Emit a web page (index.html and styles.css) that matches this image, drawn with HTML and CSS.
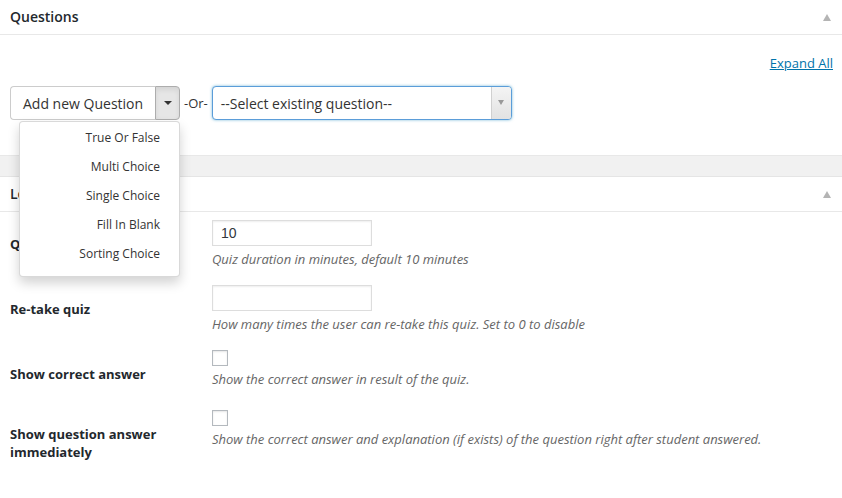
FILE: index.html
```html
<!DOCTYPE html>
<html>
<head>
<meta charset="utf-8">
<link rel="stylesheet" href="styles.css">
</head>
<body>
<div class="postbox">
  <div class="postbox-head">
    <h2>Questions</h2>
    <span class="toggle-arrow"></span>
  </div>
  <div class="inside">
    <div class="expand-row"><a href="#" class="expand-link">Expand All</a></div>
    <div class="toolbar">
      <div class="btn-group">
        <span class="btn-main">Add new Question</span>
        <span class="btn-toggle"><span class="caret"></span></span>
        <ul class="dropdown-menu">
          <li>True Or False</li>
          <li>Multi Choice</li>
          <li>Single Choice</li>
          <li>Fill In Blank</li>
          <li>Sorting Choice</li>
        </ul>
      </div>
      <span class="or">-Or-</span>
      <div class="select">
        <span class="select-text">--Select existing question--</span>
        <span class="select-arrow"><span class="select-caret"></span></span>
      </div>
    </div>
  </div>
</div>
<div class="band"></div>
<div class="postbox">
  <div class="postbox-head head2">
    <h2>Lesson Settings</h2>
    <span class="toggle-arrow"></span>
  </div>
  <div class="form">
    <div class="row row-text">
      <div class="label">Quiz duration</div>
      <div class="field">
        <div class="text-input">10</div>
        <div class="desc">Quiz duration in minutes, default 10 minutes</div>
      </div>
    </div>
    <div class="row row-text">
      <div class="label">Re-take quiz</div>
      <div class="field">
        <div class="text-input"></div>
        <div class="desc">How many times the user can re-take this quiz. Set to 0 to disable</div>
      </div>
    </div>
    <div class="row row-check">
      <div class="label">Show correct answer</div>
      <div class="field">
        <div class="checkbox"></div>
        <div class="desc">Show the correct answer in result of the quiz.</div>
      </div>
    </div>
    <div class="row row-check">
      <div class="label">Show question answer<br>immediately</div>
      <div class="field">
        <div class="checkbox"></div>
        <div class="desc">Show the correct answer and explanation (if exists) of the question right after student answered.</div>
      </div>
    </div>
  </div>
</div>
</body>
</html>
```
FILE: styles.css
```css
* { box-sizing: border-box; }
html, body { margin: 0; padding: 0; background: #fff; }
body {
  font-family: "Open Sans", "DejaVu Sans", sans-serif;
  color: #444;
  font-size: 13px;
  width: 842px;
  height: 498px;
  overflow: hidden;
}
.postbox { background: #fff; }
.postbox-head {
  display: flex;
  align-items: center;
  justify-content: space-between;
  height: 35px;
  padding: 0 10px;
  border-bottom: 1px solid #e8e8e8;
}
.postbox-head h2 {
  margin: 0;
  font-size: 14px;
  font-weight: 600;
  color: #23282d;
  line-height: 20px;
}
.toggle-arrow {
  width: 0; height: 0;
  border-left: 4px solid transparent;
  border-right: 4px solid transparent;
  border-bottom: 7px solid #b4b4b4;
  margin-right: 1px;
}
.inside { padding: 0 9px 35px 10px; position: relative; }
.expand-row { text-align: right; padding-top: 19px; line-height: 18px; }
.expand-link { color: #0073aa; text-decoration: underline; font-size: 13px; }
.toolbar { display: flex; align-items: center; margin-top: 14px; height: 34px; }
.btn-group { position: relative; display: flex; height: 34px; }
.btn-main {
  display: flex; align-items: center;
  width: 145px;
  padding-left: 12px;
  font-size: 14px;
  color: #333;
  border: 1px solid #ccc;
  border-right: none;
  border-radius: 4px 0 0 4px;
  background: #fff;
}
.btn-toggle {
  display: flex; align-items: center; justify-content: center;
  width: 25px;
  border: 1px solid #adadad;
  border-radius: 0 4px 4px 0;
  background: #e6e6e6;
  box-shadow: inset 0 3px 5px rgba(0,0,0,.08);
}
.caret {
  width: 0; height: 0;
  border-left: 4px solid transparent;
  border-right: 4px solid transparent;
  border-top: 4px solid #333;
}
.dropdown-menu {
  position: absolute;
  top: 35px;
  left: 9px;
  width: 161px;
  margin: 0;
  padding: 1px 0 8px;
  list-style: none;
  background: #fff;
  border: 1px solid rgba(0,0,0,.15);
  border-radius: 4px;
  box-shadow: 0 6px 12px rgba(0,0,0,.175);
  z-index: 10;
}
.dropdown-menu li {
  height: 29px;
  line-height: 29px;
  text-align: right;
  padding-right: 19px;
  font-size: 12px;
  color: #333;
}
.or { margin: 0 4px; font-size: 13px; color: #333; }
.select {
  display: flex;
  width: 300px;
  height: 34px;
  border: 1px solid #5b9dd9;
  border-radius: 4px;
  box-shadow: 0 0 3px rgba(30,140,190,.6);
  background: #fff;
  overflow: hidden;
}
.select-text {
  flex: 1;
  display: flex; align-items: center;
  padding-left: 8px;
  font-size: 14px;
  color: #333;
}
.select-arrow {
  width: 20px;
  display: flex; align-items: center; justify-content: center;
  border-left: 1px solid #d0d0d0;
  background: linear-gradient(#f4f4f4, #e2e2e2);
}
.select-caret {
  width: 0; height: 0;
  border-left: 3px solid transparent;
  border-right: 3px solid transparent;
  border-top: 5px solid #999;
  margin-top: -2px;
}
.band {
  height: 22px;
  background: #f1f1f1;
  border-top: 1px solid #e8e8e8;
  border-bottom: 1px solid #e5e5e5;
}
.form { padding: 0 10px; }
.row { display: flex; }
.label {
  width: 202px;
  padding-top: 23px;
  line-height: 18px;
  font-size: 13px;
  font-weight: 700;
  color: #23282d;
}
.field { padding-top: 8px; }
.row-text .field { padding-bottom: 9px; }
.row-check .field { padding-bottom: 14px; }
.text-input {
  width: 160px;
  height: 26px;
  border: 1px solid #ddd;
  box-shadow: inset 0 1px 2px rgba(0,0,0,.07);
  padding: 0 8px;
  line-height: 24px;
  font-family: "Liberation Sans", Arial, sans-serif;
  font-size: 14px;
  color: #32373c;
}
.checkbox {
  width: 16px;
  height: 16px;
  border: 1px solid #b4b9be;
  box-shadow: inset 0 1px 2px rgba(0,0,0,.1);
}
.desc {
  margin-top: 4px;
  line-height: 18px;
  font-size: 13px;
  font-style: italic;
  color: #666;
}
```
